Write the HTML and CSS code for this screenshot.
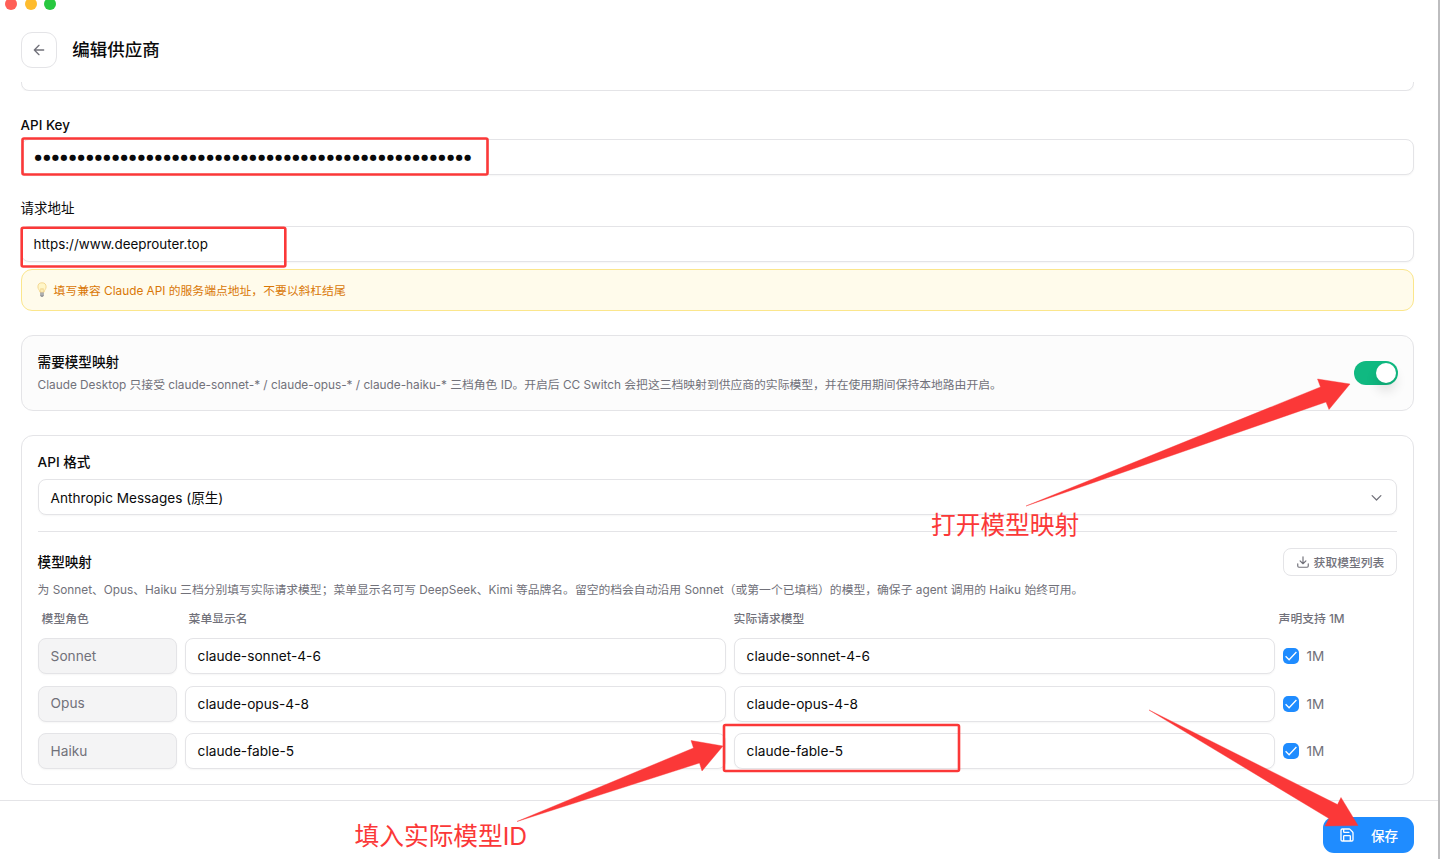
FILE: index.html
```html
<!DOCTYPE html>
<html lang="zh-CN">
<head>
<meta charset="utf-8">
<title>编辑供应商</title>
<link rel="stylesheet" href="styles.css">
</head>
<body>
<div class="window">
  <div class="lights"><i class="red"></i><i class="yellow"></i><i class="green"></i></div>
  <header class="header">
    <button class="back"><svg width="16" height="16" viewBox="0 0 24 24" class="ico"><path d="m12 19-7-7 7-7M19 12H5"/></svg></button>
    <h1>编辑供应商</h1>
  </header>
  <main class="content">
    <div class="clipped"><div class="field"></div></div>
    <label class="label key-label">API Key</label>
    <div class="field key"><span class="dots">●●●●●●●●●●●●●●●●●●●●●●●●●●●●●●●●●●●●●●●●●●●●●●●●●●●</span></div>
    <label class="label url-label">请求地址</label>
    <div class="field url"><span class="url-text">https://www.deeprouter.top</span></div>
    <div class="hint">
      <svg class="bulb" width="10" height="16" viewBox="0 0 10 16"><path d="M5 .8a4.1 4.1 0 0 0-4.1 4.1c0 2.3 1.8 3.1 2.1 5.4h4c.3-2.3 2.1-3.1 2.1-5.4A4.1 4.1 0 0 0 5 .8Z" fill="#fff6c8" stroke="#f3d58c" stroke-width=".9"/><path d="M3.8 10V6.5L5 7.3l1.2-.8V10" fill="none" stroke="#edc978" stroke-width=".7"/><path d="M3.1 10.5h3.8v3L5.800 15H4.2l-1.1-1.5Z" fill="#9b9c9e"/><path d="M3.1 12h3.800" stroke="#ddd" stroke-width=".6"/></svg>
      <span>填写兼容 Claude API 的服务端点地址，不要以斜杠结尾</span>
    </div>
    <section class="card mapping-toggle">
      <div>
        <h2>需要模型映射</h2>
        <p class="small desc">Claude Desktop 只接受 claude-sonnet-* / claude-opus-* / claude-haiku-* 三档角色 ID。开启后 CC Switch 会把这三档映射到供应商的实际模型，并在使用期间保持本地路由开启。</p>
      </div>
      <span class="switch"><i></i></span>
    </section>
    <section class="card models">
      <h2 class="format-label">API 格式</h2>
      <div class="field select"><span>Anthropic Messages (原生)</span><svg width="15" height="15" viewBox="0 0 24 24" class="ico"><path d="m5 9 7 7 7-7"/></svg></div>
      <div class="model-head">
        <h2>模型映射</h2>
        <button class="fetch"><svg width="14" height="14" viewBox="0 0 24 24" class="ico"><path d="M21 15v4a2 2 0 0 1-2 2H5a2 2 0 0 1-2-2v-4M7 10l5 5 5-5M12 15V3"/></svg><span>获取模型列表</span></button>
      </div>
      <p class="small explain">为 Sonnet、Opus、Haiku 三档分别填写实际请求模型；菜单显示名可写 DeepSeek、Kimi 等品牌名。留空的档会自动沿用 Sonnet（或第一个已填档）的模型，确保子 agent 调用的 Haiku 始终可用。</p>
      <div class="grid titles"><span class="first">模型角色</span><span class="second">菜单显示名</span><span>实际请求模型</span><span class="last">声明支持 1M</span></div>
      <div class="grid row"><div class="field role">Sonnet</div><div class="field">claude-sonnet-4-6</div><div class="field">claude-sonnet-4-6</div><div class="check"><svg width="16" height="16" viewBox="0 0 16 16"><rect width="16" height="16" rx="5" fill="#1f8cff"/><path d="m2.600 8.300 3.500 3.500L13.400 4" fill="none" stroke="#fff" stroke-width="1.3"/></svg><span>1M</span></div></div>
      <div class="grid row"><div class="field role">Opus</div><div class="field">claude-opus-4-8</div><div class="field">claude-opus-4-8</div><div class="check"><svg width="16" height="16" viewBox="0 0 16 16"><rect width="16" height="16" rx="5" fill="#1f8cff"/><path d="m2.600 8.300 3.500 3.500L13.400 4" fill="none" stroke="#fff" stroke-width="1.3"/></svg><span>1M</span></div></div>
      <div class="grid row"><div class="field role">Haiku</div><div class="field">claude-fable-5</div><div class="field">claude-fable-5</div><div class="check"><svg width="16" height="16" viewBox="0 0 16 16"><rect width="16" height="16" rx="5" fill="#1f8cff"/><path d="m2.600 8.300 3.500 3.500L13.400 4" fill="none" stroke="#fff" stroke-width="1.3"/></svg><span>1M</span></div></div>
    </section>
  </main>
  <footer class="footer"><button class="save"><svg width="16" height="16" viewBox="0 0 24 24" class="ico"><path d="M15.2 3a2 2 0 0 1 1.4.6l3.8 3.8a2 2 0 0 1 .6 1.4V19a2 2 0 0 1-2 2H5a2 2 0 0 1-2-2V5a2 2 0 0 1 2-2zM17 21v-7a1 1 0 0 0-1-1H8a1 1 0 0 0-1 1v7M7 3v4a1 1 0 0 0 1 1h7"/></svg><span>保存</span></button></footer>
  <svg class="marks" width="1440" height="859" viewBox="0 0 1440 859">
    <g fill="none" stroke="#fb3838" stroke-width="2.6">
      <rect x="22.5" y="138.5" width="465" height="36" rx="1.5"/>
      <rect x="21.7" y="227.800" width="263.600" height="38.7" rx="1.5"/>
      <rect x="724" y="725" width="235" height="46" rx="1.5"/>
    </g>
    <g fill="#fb3838" stroke="#fb3838" stroke-width=".4">
      <path d="M1026 506 1320.5 387 1317.500 379 1350 384 1329 409.500 1326 402Z"/>
      <path d="M517 821.500 693.500 748 691 740.500 723 746 702 771 699.500 763Z"/>
      <path d="M1149 710 1337.500 804.500 1341 797.500 1358 825.500 1325 826 1329 818.500Z"/>
    </g>
  </svg>
  <div class="note note-open">打开模型映射</div>
  <div class="note note-id">填入实际模型ID</div>
</div>
</body>
</html>
```
FILE: styles.css
```css
* { box-sizing: border-box; }
body { margin: 0; background: #fff; color: #0a0a0b; font-family: Inter, "Noto Sans CJK SC", sans-serif; font-size: 13.5px; }
h1, h2, p { margin: 0; }
button { font: inherit; background: #fff; padding: 0; }
.window { position: relative; width: 1440px; height: 859px; overflow: hidden; border-right: 2px solid #bdbdbf; display: flex; flex-direction: column; }
.ico { fill: none; stroke: currentColor; stroke-width: 2; stroke-linecap: round; stroke-linejoin: round; flex: none; }
.lights { height: 16px; flex: none; display: flex; gap: 7.6px; padding-left: 5px; }
.lights i { width: 12px; height: 12px; border-radius: 50%; margin-top: -2px; }
.red { background: #ff5f57; }
.yellow { background: #febc2e; }
.green { background: #28c840; }
.header { height: 66px; flex: none; display: flex; align-items: center; gap: 15.6px; padding: 1px 20.6px 0; }
.back { width: 36px; height: 36px; border: 1px solid #e4e4e7; border-radius: 11px; color: #71717a; display: flex; align-items: center; justify-content: center; }
h1 { font-size: 17.5px; line-height: 26px; font-weight: 500; padding-top: 1px; }
h2 { font-size: 13.6px; line-height: 20px; font-weight: 500; }
.content { height: 718.400px; flex: none; padding: 0 24px 0 20.6px; }
.clipped { height: 9px; overflow: hidden; display: flex; align-items: flex-end; }
.field { height: 36px; border: 1px solid #e4e4e7; border-radius: 8px; background: #fff; padding: 0 12px; display: flex; align-items: center; font-size: 13.7px; box-shadow: 0 1px 2px #0000000a; }
.clipped .field { width: 100%; flex: none; }
.label { display: block; height: 20px; line-height: 20px; font-weight: 500; }
.key-label { margin-top: 24px; font-size: 13.400px; }
.key { margin-top: 4px; padding-bottom: 1px; }
.dots { font-family: "DejaVu Sans", sans-serif; font-size: 8.300px; letter-spacing: 1.350px; padding-left: 1px; }
.url-label { margin-top: 23px; font-weight: 400; }
.url { margin-top: 8px; }
.url-text { font-size: 13.4px; }
.hint { height: 42px; margin-top: 7px; border: 1px solid #fbe68c; border-radius: 11px; background: #fffbeb; color: #d97706; display: flex; align-items: center; gap: 7px; padding-left: 15px; font-size: 11.8px; }
.hint span { padding-bottom: 2px; }
.card { border: 1px solid #e4e4e7; border-radius: 12px; padding: 0 16px; }
.mapping-toggle { height: 76px; margin-top: 24px; background: #fcfcfc; display: flex; align-items: center; justify-content: space-between; padding-right: 15px; }
.small { color: #71717a; font-size: 11.8px; line-height: 18px; white-space: nowrap; }
.desc { margin-top: 4px; }
.switch { width: 44px; height: 24px; border-radius: 12px; background: #10b981; padding: 2px; display: flex; justify-content: flex-end; }
.switch i { width: 20px; height: 20px; border-radius: 50%; background: #fff; box-shadow: 0 8px 12px #0000001f; }
.models { height: 350px; margin-top: 24px; }
.format-label { margin-top: 16px; }
.select { margin-top: 7px; justify-content: space-between; font-size: 13.6px; }
.select svg { color: #71717a; }
.model-head { margin-top: 16px; border-top: 1px solid #e4e4e7; padding-top: 16px; height: 45px; display: flex; justify-content: space-between; align-items: center; }
.fetch { width: 114px; height: 28px; border: 1px solid #e4e4e7; border-radius: 8px; color: #71717a; font-size: 11.8px; font-weight: 500; display: flex; align-items: center; justify-content: center; gap: 4px; }
.fetch span { padding-bottom: 2px; }
.explain { margin-top: 5px; }
.grid { display: grid; grid-template-columns: 139px 541px 541px 1fr; column-gap: 8px; }
.titles { height: 18px; margin-top: 10.500px; line-height: 18px; font-size: 11.8px; font-weight: 500; color: #71717a; }
.first, .second { padding-left: 4px; }
.last { margin-left: -4px; }
.row { margin-top: 11.5px; }
.titles + .row { margin-top: 10.500px; }
.row .field { padding-bottom: 0; }
.role { background: #f4f4f5; color: #71717a; }
.row .role { padding-bottom: 1px; }
.check { display: flex; align-items: center; gap: 8px; color: #71717a; font-size: 13.6px; }
.footer { height: 59px; border-top: 1px solid #e4e4e7; display: flex; justify-content: flex-end; align-items: flex-start; padding: 16px 24px 0 0; }
.save { width: 91px; height: 36px; border: 0; border-radius: 11px; background: #1f8cff; color: #fff; font-size: 13.6px; font-weight: 500; display: flex; align-items: center; justify-content: center; gap: 16px; }
.save span { padding-bottom: 1px; }
.marks { position: absolute; left: 0; top: 0; }
.note { position: absolute; color: #fb3838; font-size: 24.7px; line-height: 36px; white-space: nowrap; }
.note-open { left: 931px; top: 507px; }
.note-id { left: 354.600px; top: 818px; }
```
